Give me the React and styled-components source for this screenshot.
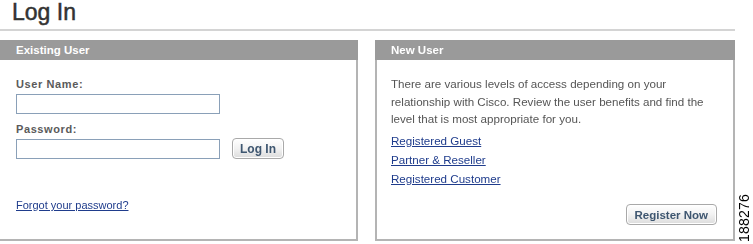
import React from "react";
import styled, { createGlobalStyle } from "styled-components";

const Global = createGlobalStyle`
  html, body { margin: 0; padding: 0; background: #fff; }
  body { font-family: "Liberation Sans", Arial, sans-serif; }
`;

const Page = styled.div`
  width: 753px;
  height: 244px;
  display: flex;
  overflow: hidden;
`;

const Content = styled.div`
  width: 735px;
  display: flex;
  flex-direction: column;
`;

const Title = styled.h1`
  margin: 0;
  height: 29px;
  padding-left: 12px;
  font-size: 23px;
  line-height: 24px;
  font-weight: normal;
  color: #333;
  -webkit-text-stroke: 0.5px #333;
`;

const Rule = styled.div`
  height: 2px;
  background: #d4d4d4;
  margin-bottom: 9px;
`;

const Panels = styled.div`
  display: flex;
  gap: 17px;
`;

const Panel = styled.section`
  width: ${(p) => p.$w}px;
  height: 201px;
  box-sizing: border-box;
  border: 2px solid #b4b4b4;
  border-top: none;
  border-left: ${(p) => (p.$noLeft ? "none" : "2px solid #b4b4b4")};
  display: flex;
  flex-direction: column;
`;

const Header = styled.div`
  height: 20px;
  background: #9a9a9a;
  color: #fff;
  font-weight: bold;
  font-size: 11.5px;
  line-height: 21px;
  padding-left: ${(p) => p.$pad}px;
  margin-left: ${(p) => (p.$noLeft ? 0 : -2)}px;
  margin-right: -2px;
`;

const Body = styled.div`
  flex: 1;
  padding: ${(p) => p.$pt}px 16px 0 ${(p) => p.$pl}px;
  display: flex;
  flex-direction: column;
`;

const Label = styled.div`
  font-size: 11px;
  font-weight: bold;
  color: #5a5a5a;
  letter-spacing: 0.6px;
  line-height: 14px;
  margin-bottom: ${(p) => p.$mb}px;
`;

const FieldRow = styled.div`
  display: flex;
  align-items: center;
  gap: 12px;
  margin-bottom: ${(p) => p.$mb || 0}px;
`;

const Input = styled.input`
  width: 204px;
  height: 20px;
  box-sizing: border-box;
  border: 1px solid #8aa0b8;
  padding: 0 2px;
  margin: 0;
  font-size: 12px;
  outline: none;
`;

const Button = styled.button`
  height: 21px;
  padding: 0 ${(p) => p.$px}px;
  box-sizing: border-box;
  border: 1px solid #a9a9a9;
  border-radius: 4px;
  background: linear-gradient(#ffffff, #f2f2f2 50%, #dcdcdc);
  box-shadow: inset 0 0 0 1px #fff;
  color: #3e5670;
  font-family: "Liberation Sans", Arial, sans-serif;
  font-weight: bold;
  font-size: ${(p) => p.$fs || 12}px;
  cursor: pointer;
`;

const Link = styled.a`
  color: #1f3c8c;
  text-decoration: underline;
  font-size: ${(p) => p.$fs || 11}px;
  line-height: 14px;
  width: fit-content;
  margin-bottom: ${(p) => p.$mb || 0}px;
`;

const Spacer = styled.div`
  flex: 1;
`;

const Text = styled.p`
  margin: 0 0 6px;
  font-size: 11.6px;
  line-height: 17.5px;
  color: #555;
`;

const LinkList = styled.div`
  display: flex;
  flex-direction: column;
  gap: 5px;
`;

const Footer = styled.div`
  display: flex;
  justify-content: flex-end;
  padding-bottom: 14px;
`;

const Side = styled.div`
  flex: 1;
  display: flex;
  align-items: flex-end;
  justify-content: center;
  padding-bottom: 2px;
`;

const FigNum = styled.span`
  writing-mode: vertical-rl;
  transform: rotate(180deg);
  font-size: 14px;
  line-height: 16px;
  color: #000;
  letter-spacing: 0.2px;
`;

export default function App() {
  return (
    <>
      <Global />
      <Page>
        <Content>
          <Title>Log In</Title>
          <Rule />
          <Panels>
            <Panel $w={358} $noLeft>
              <Header $pad={16} $noLeft>Existing User</Header>
              <Body $pt={17} $pl={16}>
                <Label $mb={3}>User Name:</Label>
                <FieldRow $mb={8}>
                  <Input type="text" autoFocus />
                </FieldRow>
                <Label $mb={2}>Password:</Label>
                <FieldRow>
                  <Input type="password" />
                  <Button $px={7}>Log In</Button>
                </FieldRow>
                <Spacer />
                <Link href="#" $mb={27}>
                  Forgot your password?
                </Link>
              </Body>
            </Panel>
            <Panel $w={360}>
              <Header $pad={16}>New User</Header>
              <Body $pt={15} $pl={14}>
                <Text>
                  There are various levels of access depending on your
                  <br />
                  relationship with Cisco. Review the user benefits and find the
                  <br />
                  level that is most appropriate for you.
                </Text>
                <LinkList>
                  <Link href="#" $fs={11.6}>Registered Guest</Link>
                  <Link href="#" $fs={11.6}>Partner &amp; Reseller</Link>
                  <Link href="#" $fs={11.6}>Registered Customer</Link>
                </LinkList>
                <Spacer />
                <Footer>
                  <Button $px={8} $fs={11.5}>Register Now</Button>
                </Footer>
              </Body>
            </Panel>
          </Panels>
        </Content>
        <Side>
          <FigNum>188276</FigNum>
        </Side>
      </Page>
    </>
  );
}
